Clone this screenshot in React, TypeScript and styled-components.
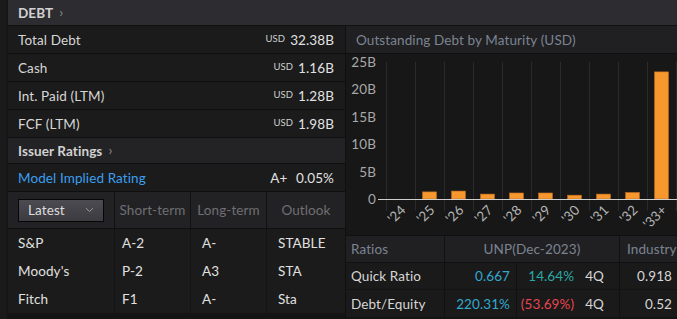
import { FC, Fragment } from 'react';
import styled, { createGlobalStyle } from 'styled-components';

const GlobalStyle = createGlobalStyle`
  body {
    margin: 0;
    background: #161616;
  }
`;

const Page = styled.div`
  width: 677px;
  height: 319px;
  box-sizing: border-box;
  background: #161616;
  border-left: 6px solid #1a1a1a;
  padding-left: 2px;
  display: flex;
  flex-direction: column;
  overflow: hidden;
  font-family: Lato, 'Open Sans', Arial, sans-serif;
  font-size: 13.5px;
  letter-spacing: 0.1px;
  color: #d9d9d9;
`;

const SectionHeader = styled.div<{ $tone?: 'main' | 'sub' }>`
  height: 25px;
  flex-shrink: 0;
  display: flex;
  align-items: center;
  gap: 6px;
  padding-left: 10px;
  background: ${(p) => (p.$tone === 'sub' ? '#232326' : '#2c2c31')};
  border-bottom: 1px solid #101010;
  font-weight: 700;
  color: #d2d2d2;
`;

const Chevron = styled.span`
  font-size: 14px;
  font-weight: 400;
  color: #8a8a8a;
  position: relative;
  top: -1px;
`;

const Body = styled.div`
  flex: 1;
  display: grid;
  grid-template-columns: 337px 1fr;
  column-gap: 1px;
  background: #101010;
  min-height: 0;
`;

const Column = styled.div`
  display: flex;
  flex-direction: column;
  background: #141414;
  min-height: 0;
`;

const MetricRow = styled.div`
  height: 27px;
  flex-shrink: 0;
  display: flex;
  align-items: center;
  justify-content: space-between;
  padding: 0 11px 0 10px;
  background: #1b1b1b;
  border-bottom: 1px solid #101010;
`;

const Label = styled.span<{ $accent?: boolean }>`
  color: ${(p) => (p.$accent ? '#3a9ff0' : '#d6d6d6')};
`;

const Amount = styled.span`
  display: flex;
  align-items: baseline;
  gap: 5px;
  color: #e2e2e2;
`;

const Currency = styled.span`
  font-size: 9.5px;
  position: relative;
  top: -3px;
  color: #d0d0d0;
`;

const RatingsGrid = styled.div`
  display: grid;
  grid-template-columns: 107px 76px 76px 78px;
  grid-template-rows: 37px repeat(3, 28px);
  background: #1b1b1b;
`;

const RatingsHead = styled.div<{ $first?: boolean; $last?: boolean }>`
  display: flex;
  align-items: center;
  justify-content: ${(p) => (p.$first ? 'flex-start' : 'center')};
  padding-left: ${(p) => (p.$first ? '10px' : '0')};
  background: #222224;
  border-bottom: 1px solid #101010;
  border-right: ${(p) => (p.$last ? 'none' : '1px solid #111')};
  color: #6f6f74;
  white-space: nowrap;
`;

const Dropdown = styled.div`
  width: 86px;
  height: 23px;
  box-sizing: border-box;
  display: flex;
  align-items: center;
  justify-content: space-between;
  padding: 0 9px 0 9px;
  border: 1px solid #070707;
  background: linear-gradient(#4b4b51, #3b3b40);
  color: #dedede;
`;

const RatingCell = styled.div<{ $pad?: number; $last?: boolean }>`
  display: flex;
  align-items: center;
  padding-left: ${(p) => p.$pad ?? 10}px;
  border-right: ${(p) => (p.$last ? 'none' : '1px solid #141414')};
  color: #e0e0e0;
`;

const ChartTitle = styled.div`
  height: 27px;
  flex-shrink: 0;
  display: flex;
  align-items: center;
  padding-left: 10px;
  background: #202023;
  border-bottom: 1px solid #101010;
  color: #7c8491;
`;

const ChartArea = styled.div`
  height: 181px;
  flex-shrink: 0;
  background: #171717;
  border-bottom: 1px solid #101010;
`;

const RatiosGrid = styled.div`
  display: grid;
  grid-template-columns: 99px 72px 103px 57px;
  grid-template-rows: 27px 27px 28px;
  background: #1a1a1a;
`;

const RatiosHead = styled.div<{ $span?: number; $align?: string; $last?: boolean }>`
  grid-column: span ${(p) => p.$span ?? 1};
  display: flex;
  align-items: center;
  justify-content: ${(p) => p.$align ?? 'flex-start'};
  padding-left: ${(p) => (p.$align === 'center' ? 0 : p.$last ? 7 : 5)}px;
  background: #202023;
  border-right: ${(p) => (p.$last ? 'none' : '1px solid #111')};
  border-bottom: 1px solid #101010;
  color: #7c8491;
  white-space: nowrap;
  overflow: hidden;
`;

const RatioCell = styled.div<{ $align?: 'left' | 'right'; $color?: string; $pad?: number; $last?: boolean }>`
  display: flex;
  align-items: center;
  justify-content: ${(p) => (p.$align === 'right' ? 'flex-end' : 'flex-start')};
  gap: 11px;
  padding: ${(p) => (p.$align === 'right' ? `0 ${p.$pad ?? 6}px 0 0` : '0 0 0 5px')};
  border-right: ${(p) => (p.$last ? 'none' : '1px solid #111')};
  border-bottom: 1px solid #131313;
  color: ${(p) => p.$color ?? '#d6d6d6'};
  white-space: nowrap;
`;

const Period = styled.span`
  color: #d6d6d6;
`;

const metrics = [
  { label: 'Total Debt', value: '32.38B' },
  { label: 'Cash', value: '1.16B' },
  { label: 'Int. Paid (LTM)', value: '1.28B' },
  { label: 'FCF (LTM)', value: '1.98B' },
];

const ratings = [
  ['S&P', 'A-2', 'A-', 'STABLE'],
  ["Moody's", 'P-2', 'A3', 'STA'],
  ['Fitch', 'F1', 'A-', 'Sta'],
];

const maturities = [
  { year: "'24", value: 0 },
  { year: "'25", value: 1.3 },
  { year: "'26", value: 1.45 },
  { year: "'27", value: 0.9 },
  { year: "'28", value: 1.1 },
  { year: "'29", value: 1.1 },
  { year: "'30", value: 0.7 },
  { year: "'31", value: 0.9 },
  { year: "'32", value: 1.2 },
  { year: "'33+", value: 23.2 },
];

const MaturityChart: FC = () => {
  const base = 145;
  const perB = 5.48;
  const left = 40;
  const step = 29;
  const ticks = [25, 20, 15, 10, 5, 0];

  return (
    <svg width={331} height={181} style={{ display: 'block' }}>
      {Array.from({ length: 11 }).map((_, i) => (
        <line
          key={i}
          x1={left + step * i + 0.5}
          x2={left + step * i + 0.5}
          y1={8}
          y2={157}
          stroke="#2a2a2a"
          strokeWidth={1}
        />
      ))}
      {ticks.map((t) => (
        <text
          key={t}
          x={30}
          y={base - t * perB + 5}
          textAnchor="end"
          fontSize={13.5}
          fill="#a8a8a8"
          fontFamily="Lato, Arial, sans-serif"
        >
          {t === 0 ? '0' : `${t}B`}
        </text>
      ))}
      {maturities.map((m, i) => {
        const h = m.value * perB;
        const cx = left + step * i + 14.5;
        return h > 0 ? (
          <rect
            key={m.year}
            x={cx - 7}
            y={base - h}
            width={14}
            height={h}
            fill="#f7982f"
            stroke="#b9681c"
            strokeWidth={0.6}
          />
        ) : null;
      })}
      <line x1={32} x2={331} y1={base + 0.5} y2={base + 0.5} stroke="#cfcfcf" strokeWidth={1} />
      {maturities.map((m, i) => {
        const cx = left + step * i + 14.5;
        return (
          <text
            key={m.year}
            x={cx + 6}
            y={157}
            textAnchor="end"
            fontSize={13.5}
            fill="#b4b4b4"
            fontFamily="Lato, Arial, sans-serif"
            transform={`rotate(-45 ${cx + 6} 157)`}
          >
            {m.year}
          </text>
        );
      })}
    </svg>
  );
};

const App: FC = () => {
  return (
    <>
      <GlobalStyle />
      <Page>
        <SectionHeader>
          DEBT <Chevron>›</Chevron>
        </SectionHeader>
        <Body>
          <Column>
            {metrics.map((m) => (
              <MetricRow key={m.label}>
                <Label>{m.label}</Label>
                <Amount>
                  <Currency>USD</Currency>
                  {m.value}
                </Amount>
              </MetricRow>
            ))}
            <SectionHeader $tone="sub">
              Issuer Ratings <Chevron>›</Chevron>
            </SectionHeader>
            <MetricRow>
              <Label $accent>Model Implied Rating</Label>
              <Amount>
                <span>A+</span>
                <span>&nbsp;0.05%</span>
              </Amount>
            </MetricRow>
            <RatingsGrid>
              <RatingsHead $first>
                <Dropdown>
                  <span>Latest</span>
                  <svg width="9" height="6" viewBox="0 0 9 6">
                    <path d="M1 1.2 L4.5 4.6 L8 1.2" fill="none" stroke="#9a9aa0" strokeWidth="1" />
                  </svg>
                </Dropdown>
              </RatingsHead>
              <RatingsHead>Short-term</RatingsHead>
              <RatingsHead>Long-term</RatingsHead>
              <RatingsHead $last>Outlook</RatingsHead>
              {ratings.map((r) => (
                <Fragment key={r[0]}>
                  <RatingCell>{r[0]}</RatingCell>
                  <RatingCell $pad={7}>{r[1]}</RatingCell>
                  <RatingCell $pad={11}>{r[2]}</RatingCell>
                  <RatingCell $pad={11} $last>
                    {r[3]}
                  </RatingCell>
                </Fragment>
              ))}
            </RatingsGrid>
          </Column>
          <Column>
            <ChartTitle>Outstanding Debt by Maturity (USD)</ChartTitle>
            <ChartArea>
              <MaturityChart />
            </ChartArea>
            <RatiosGrid>
              <RatiosHead>Ratios</RatiosHead>
              <RatiosHead $span={2} $align="center">
                UNP(Dec-2023)
              </RatiosHead>
              <RatiosHead $last>Industry</RatiosHead>

              <RatioCell>Quick Ratio</RatioCell>
              <RatioCell $align="right" $color="#33a9cf">
                0.667
              </RatioCell>
              <RatioCell $align="right" $color="#2aa9a6" $pad={15}>
                14.64%<Period>4Q</Period>
              </RatioCell>
              <RatioCell $align="right" $pad={5} $last>
                0.918
              </RatioCell>

              <RatioCell>Debt/Equity</RatioCell>
              <RatioCell $align="right" $color="#33a9cf">
                220.31%
              </RatioCell>
              <RatioCell $align="right" $color="#e8464f" $pad={15}>
                (53.69%)<Period>4Q</Period>
              </RatioCell>
              <RatioCell $align="right" $pad={5} $last>
                0.52
              </RatioCell>
            </RatiosGrid>
          </Column>
        </Body>
      </Page>
    </>
  );
};

export default App;
